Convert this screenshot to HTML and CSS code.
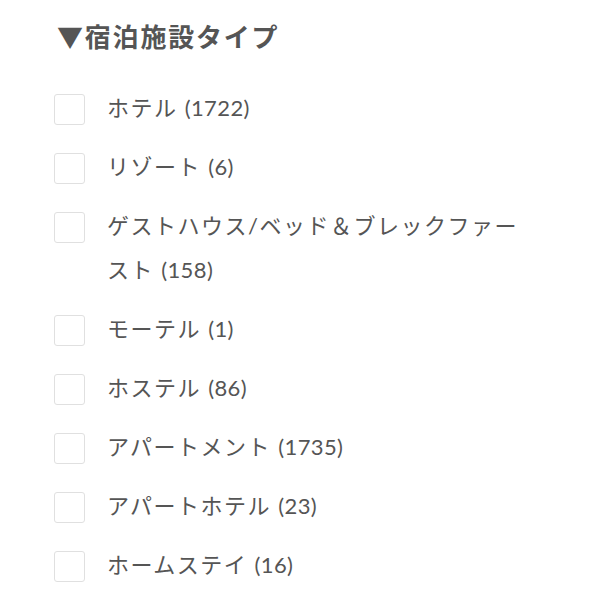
FILE: index.html
```html
<!DOCTYPE html>
<html lang="ja">
<head>
<meta charset="utf-8">
<link rel="stylesheet" href="styles.css">
</head>
<body>
<section class="filter">
  <h2 class="filter-title">▼宿泊施設タイプ</h2>
  <ul class="options">
    <li class="option"><span class="box"></span><span class="label">ホテル <span class="count">(1722)</span></span></li>
    <li class="option"><span class="box"></span><span class="label">リゾート <span class="count">(6)</span></span></li>
    <li class="option"><span class="box"></span><span class="label">ゲストハウス/ベッド＆ブレックファースト <span class="count">(158)</span></span></li>
    <li class="option"><span class="box"></span><span class="label">モーテル <span class="count">(1)</span></span></li>
    <li class="option"><span class="box"></span><span class="label">ホステル <span class="count">(86)</span></span></li>
    <li class="option"><span class="box"></span><span class="label">アパートメント <span class="count">(1735)</span></span></li>
    <li class="option"><span class="box"></span><span class="label">アパートホテル <span class="count">(23)</span></span></li>
    <li class="option"><span class="box"></span><span class="label">ホームステイ <span class="count">(16)</span></span></li>
  </ul>
</section>
</body>
</html>
```
FILE: styles.css
```css
html, body {
  margin: 0;
  padding: 0;
  background: #ffffff;
}
body {
  font-family: "Lato", "Noto Sans CJK JP", sans-serif;
  color: #555555;
}
.filter {
  padding: 17px 0 0 57px;
}
.filter-title {
  margin: 0;
  font-size: 26px;
  line-height: 40px;
  font-weight: 700;
  color: #555555;
  letter-spacing: 1.8px;
}
.options {
  list-style: none;
  margin: 29px 0 0 -3px;
  padding: 0;
  display: flex;
  flex-direction: column;
  gap: 15px;
}
.option {
  display: flex;
  align-items: flex-start;
  gap: 22px;
}
.box {
  flex: none;
  width: 29px;
  height: 29px;
  margin-top: 8px;
  border: 1px solid #e0e0e0;
  border-radius: 3px;
  background: #fff;
}
.label {
  width: 422px;
  font-size: 22px;
  line-height: 44px;
  letter-spacing: 1.5px;
  color: #555555;
}
.count {
  letter-spacing: 0.4px;
}
```
